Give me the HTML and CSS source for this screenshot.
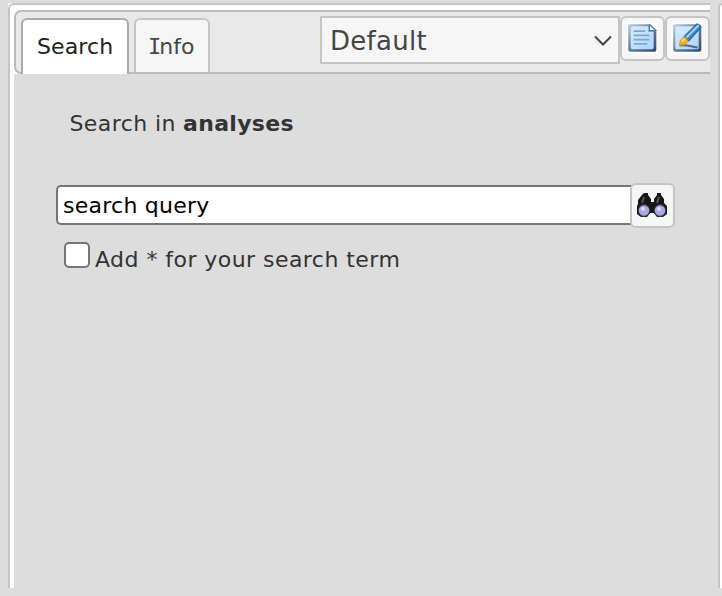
FILE: index.html
```
<!DOCTYPE html>
<html lang="en">
<head>
<meta charset="utf-8">
<title>Search</title>
<link rel="stylesheet" href="styles.css">
</head>
<body>
<main class="workspace">
  <div class="pane-view">
    <section class="pane">
      <header class="toolbar">
        <nav class="tabs">
          <a class="tab tab-active">Search</a>
          <a class="tab"><span class="cap-i">I</span>nfo</a>
        </nav>
        <div class="tools">
          <div class="select"><span class="t-default">Default</span>
            <svg class="chevron" width="18" height="12" viewBox="0 0 18 12"><path d="M1 1.500 9 9.500l8-8" fill="none" stroke="#444" stroke-width="2"/></svg>
          </div>
          <button class="icon-button" aria-label="New">
            <svg width="34" height="34" viewBox="0 0 32 32">
              <defs>
                <linearGradient id="frame" x1="0" y1="0" x2="1" y2="1"><stop offset="0" stop-color="#b8d0e5"/><stop offset=".5" stop-color="#68809f"/><stop offset="1" stop-color="#304766"/></linearGradient>
                <linearGradient id="paper" x1="0" y1="0" x2="1" y2="1"><stop offset="0" stop-color="#d9edff"/><stop offset="1" stop-color="#a9d4fc"/></linearGradient>
              </defs>
              <path fill="#fff" d="M1.500 1.500h29v29h-29z"/>
              <path d="M4 3h20l5.500 5.500V27q0 2-2 2H5q-2 0-2-2V5q0-2 1-2z" fill="url(#frame)"/>
              <path d="M7 5h15v5h5v15q0 1.500-1.500 1.500H7Q5.500 26.500 5.500 25V6.500Q5.500 5 7 5z" fill="url(#paper)"/>
              <path d="M23 3.500V9h6z" fill="#edf7ff" stroke="#547da8"/>
              <path d="M8 9.500h11M8 13.500h15M8 17.500h15M8 21.500h13" stroke="#7ea6d4" stroke-width="1.500"/>
            </svg>
          </button>
          <button class="icon-button" aria-label="Edit">
            <svg width="34" height="34" viewBox="0 0 32 32">
              <path fill="#fff" d="M1.500 1.500h29v29h-29z"/>
              <rect x="3" y="3" width="26.500" height="26" rx="2" fill="url(#frame)"/>
              <rect x="5" y="5" width="22" height="21.500" rx="1" fill="url(#paper)"/>
              <path d="M9 23q6-.5 10 .5t7 1.500" fill="none" stroke="#4e6887" stroke-width="1.800"/>
              <path d="M13 15 25.500 2.500 29 6 17.500 19z" fill="#3d85c6" stroke="#2e6299"/>
              <path d="M15.500 15.500 27 4" stroke="#9dd1f5" stroke-width="2"/>
              <path d="M9.500 18.500 13.500 14.500l4 4.500-4 3.500-4.500.5z" fill="#f3ad24" stroke="#c9872b" stroke-width=".7"/>
              <path d="m11 19 3-2" stroke="#ffdf68" stroke-width="2"/>
            </svg>
          </button>
        </div>
      </header>
      <div class="content">
        <div class="heading"><span class="t-in">Search in</span> <b>analyses</b></div>
        <form class="search-row">
          <div class="field">search query</div>
          <button class="icon-button find" type="button" aria-label="Find">
            <svg width="32" height="28" viewBox="0 0 32 28">
              <path d="M8 2h4v2l3 4v3h3V8l3-4V2h4v2l3 4v4l3 3v8l-4 3h-6l-3-4h-4l-3 4H5l-4-3v-8l1-2V9l4-5z" fill="#161616"/>
              <path d="M8 6 6 12M23 6l-2 6" stroke="#55555c" stroke-width="2"/>
              <g fill="#aaa7e2" stroke="#34343f" stroke-width="1.200"><circle cx="8" cy="19.500" r="5.800"/><circle cx="24" cy="19.500" r="5.800"/></g>
              <g fill="#dddcff"><circle cx="7" cy="18" r="2"/><circle cx="23" cy="18" r="2"/></g>
            </svg>
          </button>
        </form>
        <label class="option"><input class="check" type="checkbox"><span class="t-add">Add * for your search term</span></label>
      </div>
    </section>
  </div>
  <aside class="next-pane"></aside>
</main>
</body>
</html>
```
FILE: styles.css
```
* { box-sizing: border-box; }
body {
  margin: 0;
  height: 596px;
  overflow: hidden;
  background: #ddd;
  color: #333;
  font: 22px/28px Verdana, "DejaVu Sans", sans-serif;
}
.workspace { display: flex; gap: 8px; padding: 3px 0 0 8px; height: 588px; }
.pane-view { width: 702px; flex: none; overflow: hidden; background: #fff; }
.pane {
  width: 720px;
  height: 600px;
  padding: 5px 0 0 4px;
  border: 2px solid #c5c5c5;
  border-radius: 6px;
  background: #fff;
}
.toolbar {
  display: flex;
  height: 64px;
  padding: 4px 0 0 5px;
  border: 2px solid #bbb;
  border-radius: 7px 0 0 7px;
  background: #e9e9e9;
}
.tabs { display: flex; gap: 5px; width: 299px; padding-top: 2px; }
.tab {
  width: 76px;
  height: 54px;
  padding: 13px 0 0 14px;
  border: 2px solid #c5c5c5;
  border-bottom: 0;
  border-radius: 6px 6px 0 0;
  background: #f6f6f6;
  color: #454545;
  white-space: nowrap;
}
.tab-active { width: 108px; height: 56px; border-color: #aaa; background: #fff; color: #212121; letter-spacing: .1px; }
.cap-i { margin-left: -2px; font-family: "DejaVu Sans Mono", monospace; letter-spacing: -2px; }
.tools { display: flex; align-items: flex-start; }
.select {
  display: flex;
  align-items: center;
  justify-content: space-between;
  width: 300px;
  height: 48px;
  padding: 2px 6px 0 8px;
  border: 2px solid #c5c5c5;
  background: #f6f6f6;
  color: #454545;
  font-size: 26px;
  letter-spacing: .3px;
}
.icon-button {
  display: flex;
  align-items: center;
  justify-content: center;
  width: 45px;
  height: 45px;
  padding: 0 1px 1px 0;
  border: 2px solid #c5c5c5;
  border-radius: 6px;
  background: #f6f6f6;
}
.content { height: 520px; padding: 36px 0 0 42px; background: #ddd; }
.heading { padding-left: 13.500px; letter-spacing: .3px; white-space: nowrap; }
.t-in { letter-spacing: .4px; }
.search-row { display: flex; margin-top: 45px; }
.field {
  width: 576px;
  height: 40px;
  margin-top: 2px;
  padding: 5px;
  border: 2px solid #767676;
  border-right: 0;
  border-radius: 5px 0 0 5px;
  background: #fff;
  color: #000;
  letter-spacing: .25px;
}
.find { margin-left: -2px; padding-right: 2px; }
.option { display: flex; margin: 14px 0 0 8px; letter-spacing: .45px; }
.check {
  width: 26px;
  height: 26px;
  margin: 0 5px 0 0;
  appearance: none;
  border: 2px solid #767676;
  border-radius: 5px;
  background: #fff;
}
.t-add { padding-top: 4px; }
.next-pane { flex: 1; overflow: hidden; background: #fff; border: solid #c5c5c5; border-width: 2px 0 0 2px; border-radius: 6px 0 0; }
```
